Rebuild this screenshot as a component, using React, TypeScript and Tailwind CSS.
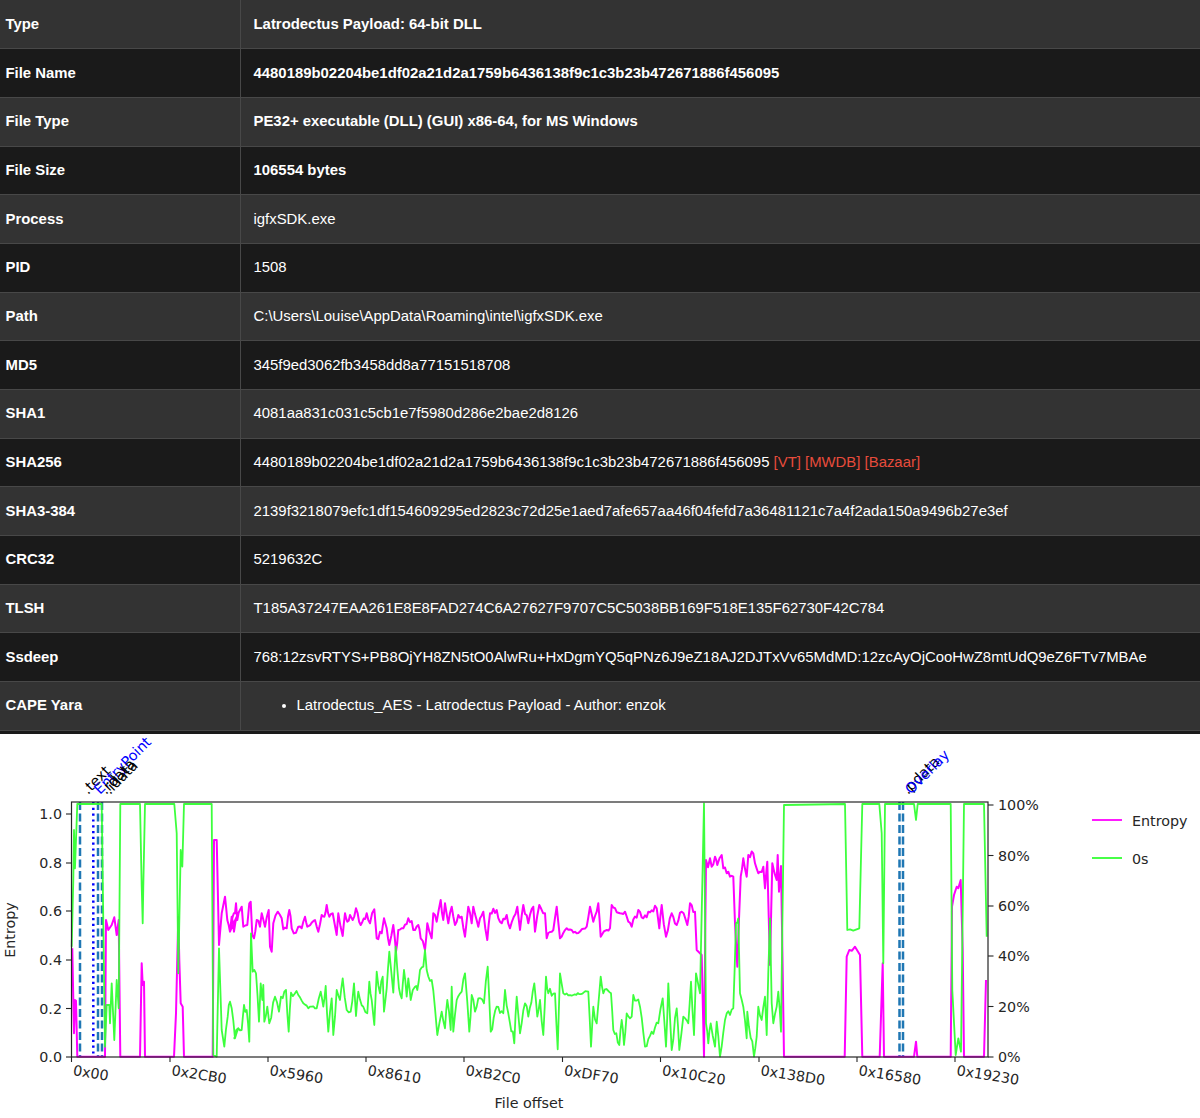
import React from 'react';

type Row = { label: string; value: React.ReactNode; bold?: boolean };

const rows: Row[] = [
    { label: 'Type', value: 'Latrodectus Payload: 64-bit DLL', bold: true },
    { label: 'File Name', value: '4480189b02204be1df02a21d2a1759b6436138f9c1c3b23b472671886f456095', bold: true },
    { label: 'File Type', value: 'PE32+ executable (DLL) (GUI) x86-64, for MS Windows', bold: true },
    { label: 'File Size', value: '106554 bytes', bold: true },
    { label: 'Process', value: 'igfxSDK.exe' },
    { label: 'PID', value: '1508' },
    { label: 'Path', value: 'C:\\Users\\Louise\\AppData\\Roaming\\intel\\igfxSDK.exe' },
    { label: 'MD5', value: '345f9ed3062fb3458dd8a77151518708' },
    { label: 'SHA1', value: '4081aa831c031c5cb1e7f5980d286e2bae2d8126' },
    {
        label: 'SHA256',
        value: (
            <>
                4480189b02204be1df02a21d2a1759b6436138f9c1c3b23b472671886f456095{' '}
                <a className="text-[#e74c3c]">[VT]</a> <a className="text-[#e74c3c]">[MWDB]</a>{' '}
                <a className="text-[#e74c3c]">[Bazaar]</a>
            </>
        ),
    },
    { label: 'SHA3-384', value: '2139f3218079efc1df154609295ed2823c72d25e1aed7afe657aa46f04fefd7a36481121c7a4f2ada150a9496b27e3ef' },
    { label: 'CRC32', value: '5219632C' },
    { label: 'TLSH', value: 'T185A37247EAA261E8E8FAD274C6A27627F9707C5C5038BB169F518E135F62730F42C784' },
    { label: 'Ssdeep', value: '768:12zsvRTYS+PB8OjYH8ZN5tO0AlwRu+HxDgmYQ5qPNz6J9eZ18AJ2DJTxVv65MdMD:12zcAyOjCooHwZ8mtUdQ9eZ6FTv7MBAe' },
    {
        label: 'CAPE Yara',
        value: (
            <ul className="list-disc pl-[43px]">
                <li>Latrodectus_AES - Latrodectus Payload - Author: enzok</li>
            </ul>
        ),
    },
];

// traced from the plot, [x, y] end up as page pixels because the svg viewBox starts at y=734
const z4 = (p: number[][]) => p.map(([x, y]) => [400 + x / 3, 790 + y / 3]);
const z9 = (p: number[][]) => p.map(([x, y]) => [230 + x / 3, 800 + y / 3]);
const z8 = (p: number[][]) => p.map(([x, y]) => [60 + x / 3, 800 + y / 3]);
const z10 = (p: number[][]) => p.map(([x, y]) => [840 + x / 3, 800 + y / 3]);

// the trace is coarser than the real samples, so fill the noisy stretches back in
function roughen(points: number[][], amp: number) {
    const out: number[][] = [];
    points.forEach(([x, y], i) => {
        const next = points[i + 1];
        out.push([x, y]);
        if (!next || x < 222 || x > 782 || (x > 694 && x < 706) || next[0] - x < 2.2) return;
        const calm = (x > 552 && x < 590) || (x > 292 && x < 320);
        const steps = Math.max(2, Math.floor((next[0] - x) / 1.5));
        for (let s = 1; s < steps; s++) {
            const t = s / steps;
            const seed = Math.sin((x + s) * 12.9898 + y * 78.233) * 43758.5453;
            const noise = (seed - Math.floor(seed)) * 2 - 1;
            out.push([x + (next[0] - x) * t, y + (next[1] - y) * t + noise * amp * (calm ? 0.3 : 1)]);
        }
    });
    return out;
}

const entropy = [
    ...z8([[37, 445], [40, 600], [42, 700], [45, 600], [48, 602], [52, 770], [135, 770], [138, 360], [145, 390], [155, 375], [163, 352], [170, 405], [176, 360], [181, 770], [240, 770], [245, 490], [248, 555], [252, 545], [255, 770], [342, 770], [348, 640], [355, 350], [358, 480], [362, 610], [368, 620], [372, 770], [458, 770], [462, 120], [470, 120], [472, 200], [477, 435], [485, 340], [495, 290], [502, 360], [510, 395], [515, 350], [522, 395], [530, 350]]),
    ...z9([[0, 395], [8, 350], [15, 340], [18, 310], [22, 360], [30, 330], [35, 320], [40, 380], [52, 375], [58, 310], [62, 305], [67, 405], [72, 415], [80, 360], [90, 380], [95, 340], [105, 380], [116, 330], [120, 440], [125, 455], [130, 370], [143, 335], [155, 355], [160, 388], [170, 385], [178, 330], [185, 385], [198, 398], [205, 380], [215, 385], [225, 350], [232, 380], [255, 360], [265, 395], [275, 345], [283, 350], [290, 315], [298, 350], [308, 340], [320, 405], [325, 340], [338, 408], [345, 340], [352, 365], [360, 345], [368, 360], [378, 325], [392, 375], [410, 340], [420, 370], [433, 328], [440, 415], [455, 400], [462, 355], [470, 385], [478, 435], [490, 375], [498, 455], [505, 390], [520, 385], [535, 355], [555, 390], [565, 375], [572, 415], [585, 450], [592, 370], [605, 415], [610, 340], [620, 365], [632, 300], [640, 360], [645, 310], [655, 370], [665, 320], [675, 375], [685, 345], [695, 350], [705, 410], [715, 320], [725, 370], [730, 320], [745, 380]]),
    ...z4([[250, 365], [262, 450], [270, 370], [290, 360], [300, 395], [320, 375], [330, 415], [352, 350], [360, 420], [370, 345], [385, 400], [400, 350], [405, 425], [418, 345], [435, 370], [440, 445], [460, 420], [470, 350], [480, 445], [500, 415], [530, 430], [560, 410], [570, 350], [580, 395], [595, 340], [602, 440], [630, 415], [635, 345], [660, 370], [675, 365], [695, 410], [715, 360], [730, 385], [745, 365], [770, 355], [778, 415], [785, 345], [798, 440], [815, 370], [830, 405], [845, 365], [862, 405], [870, 340], [885, 365], [890, 480], [905, 495], [912, 800], [918, 210], [924, 232], [930, 205], [935, 230], [945, 200], [952, 225], [965, 195], [970, 235], [985, 245], [1000, 260], [1005, 400], [1012, 530], [1022, 260], [1030, 205], [1040, 260], [1045, 195], [1060, 190], [1075, 250], [1090, 230], [1095, 295], [1102, 215], [1110, 525], [1117, 220], [1130, 270], [1133, 195], [1137, 305], [1143, 228], [1152, 800]]),
    ...z10([[14, 770], [20, 470], [28, 450], [36, 452], [45, 440], [60, 465], [67, 770], [119, 770], [128, 490], [132, 770], [222, 770], [228, 725], [232, 770], [332, 770], [336, 320], [342, 285], [350, 260], [355, 265], [362, 240], [368, 450], [372, 770], [432, 770], [438, 540]]),
];

const zeros = [
    ...z8([[35, 440], [40, 240], [42, 90], [45, 205], [52, 12], [125, 12], [135, 740], [140, 615], [148, 615], [150, 670], [155, 550], [163, 720], [170, 540], [176, 625], [181, 12], [240, 12], [245, 260], [248, 370], [250, 260], [255, 12], [343, 12], [350, 100], [355, 520], [362, 150], [367, 200], [372, 12], [455, 12], [460, 765], [470, 770], [477, 445], [485, 690], [493, 740], [503, 650], [510, 605], [515, 625], [525, 715], [535, 685]]),
    ...z9([[13, 715], [25, 685], [35, 690], [42, 615], [50, 630], [58, 725], [63, 400], [68, 515], [78, 520], [87, 665], [92, 550], [97, 600], [100, 555], [103, 665], [112, 620], [118, 670], [135, 590], [147, 635], [153, 590], [168, 570], [176, 695], [183, 578], [205, 585], [220, 610], [235, 625], [245, 620], [260, 625], [272, 575], [280, 620], [287, 558], [295, 695], [305, 595], [310, 705], [320, 570], [330, 600], [338, 535], [350, 630], [362, 635], [372, 550], [378, 648], [385, 575], [400, 620], [412, 640], [418, 545], [425, 600], [433, 675], [440, 515], [450, 580], [458, 530], [462, 635], [470, 565], [478, 455], [490, 578], [497, 440], [507, 565], [515, 595], [522, 510], [530, 590], [535, 535], [542, 600], [555, 560], [562, 570], [570, 510], [580, 500], [585, 450], [590, 510], [605, 540], [615, 625], [622, 705], [635, 635], [645, 685], [652, 600], [662, 690], [665, 560], [670, 695], [680, 600], [695, 575], [705, 520], [718, 695], [725, 585], [735, 635], [745, 595]]),
    ...z4([[252, 640], [263, 530], [272, 725], [290, 650], [310, 670], [315, 600], [325, 670], [343, 760], [350, 620], [360, 730], [375, 640], [385, 680], [403, 580], [412, 680], [420, 630], [430, 735], [438, 560], [445, 610], [465, 610], [473, 778], [480, 550], [490, 610], [520, 615], [565, 605], [573, 770], [580, 650], [590, 700], [602, 560], [610, 610], [633, 610], [640, 720], [658, 765], [665, 690], [672, 765], [680, 670], [695, 680], [700, 615], [720, 650], [735, 770], [775, 700], [788, 625], [798, 770], [805, 580], [815, 780], [830, 655], [838, 780], [850, 680], [865, 700], [873, 575], [882, 735], [888, 550], [900, 610], [912, 40], [918, 700], [925, 760], [932, 700], [945, 770], [950, 695], [960, 800], [975, 690], [1000, 655], [1008, 400], [1015, 385], [1020, 610], [1030, 650], [1040, 745], [1042, 665], [1062, 800], [1070, 740], [1075, 650], [1085, 690], [1095, 620], [1100, 735], [1110, 385], [1115, 640], [1120, 700], [1135, 605], [1143, 725], [1152, 45]]),
    ...z10([[15, 12], [22, 390], [30, 388], [40, 392], [58, 385], [67, 12], [118, 12], [125, 100], [130, 490], [135, 12], [222, 12], [228, 60], [233, 12], [332, 12], [337, 570], [347, 765], [355, 715], [363, 755], [372, 12], [432, 12], [440, 410]]),
];

const toPoints = (p: number[][]) => p.map(([x, y]) => x.toFixed(1) + ',' + y.toFixed(1)).join(' ');

const xTicks = [
    [71.5, '0x00'], [170, '0x2CB0'], [268, '0x5960'], [366, '0x8610'], [464, '0xB2C0'],
    [562.5, '0xDF70'], [660.5, '0x10C20'], [759, '0x138D0'], [857, '0x16580'], [955, '0x19230'],
] as [number, string][];
const leftTicks = [[814, '1.0'], [863, '0.8'], [911, '0.6'], [960, '0.4'], [1008.5, '0.2'], [1057, '0.0']] as [number, string][];
const rightTicks = [[805, '100%'], [855.5, '80%'], [906, '60%'], [956, '40%'], [1006.5, '20%'], [1057, '0%']] as [number, string][];

const sections = [
    [80, 'dash'], [93.3, 'dot'], [98, 'dash'], [102, 'dash'], [899.5, 'dash'], [903, 'dash'],
] as [number, string][];
const sectionLabels = [
    [88, '.text', 'black'], [100, 'EntryPoint', 'blue'], [106, '.rdata', 'black'], [110, '.idata', 'black'],
    [908, '.pdata', 'black'], [911, 'Overlay', 'blue'],
] as [number, string, string][];

function EntropyChart() {
    return (
        <svg viewBox="0 734 1200 384" className="block w-[1200px] h-[384px] bg-white font-['DejaVu_Sans',sans-serif] text-[14.3px]">
            {sections.map(([x, kind]) => (
                <line
                    key={x}
                    x1={x}
                    x2={x}
                    y1={802}
                    y2={1057}
                    stroke={kind === 'dot' ? '#0000ff' : '#1f77b4'}
                    strokeWidth={2.5}
                    strokeDasharray={kind === 'dot' ? '2.2 3.6' : '8 3.5'}
                />
            ))}
            <polyline points={toPoints(roughen(entropy, 3.5))} fill="none" stroke="#ff00ff" strokeWidth={2} strokeLinejoin="round" />
            <polyline points={toPoints(roughen(zeros, 4.5))} fill="none" stroke="#33ff33" strokeWidth={1.8} strokeLinejoin="round" opacity={0.95} />
            <rect x={71.5} y={802} width={916.5} height={255} fill="none" stroke="#262626" strokeWidth={1.2} />

            {xTicks.map(([x, t]) => (
                <g key={t}>
                    <line x1={x} x2={x} y1={1057} y2={1062} stroke="#262626" strokeWidth={1.1} />
                    <text x={x + 1} y={1075} transform={`rotate(9 ${x + 1} 1075)`} fill="#262626">{t}</text>
                </g>
            ))}
            {leftTicks.map(([y, t]) => (
                <g key={t}>
                    <line x1={66} x2={71.5} y1={y} y2={y} stroke="#262626" strokeWidth={1.1} />
                    <text x={62} y={y + 5} textAnchor="end" fill="#262626">{t}</text>
                </g>
            ))}
            {rightTicks.map(([y, t]) => (
                <g key={t}>
                    <line x1={988} x2={993.5} y1={y} y2={y} stroke="#262626" strokeWidth={1.1} />
                    <text x={998} y={y + 5} fill="#262626">{t}</text>
                </g>
            ))}

            {sectionLabels.map(([x, t, color]) => (
                <text key={t} x={x} y={795} transform={`rotate(-45 ${x} 795)`} fill={color}>{t}</text>
            ))}

            <text x={529} y={1108} textAnchor="middle" fill="#262626">File offset</text>
            <text x={15} y={930} textAnchor="middle" transform="rotate(-90 15 930)" fill="#262626">Entropy</text>

            <line x1={1092} x2={1122} y1={820} y2={820} stroke="#ff00ff" strokeWidth={1.8} />
            <text x={1132} y={826} fill="#262626">Entropy</text>
            <line x1={1092} x2={1122} y1={858} y2={858} stroke="#33ff33" strokeWidth={1.8} />
            <text x={1132} y={864} fill="#262626">0s</text>
        </svg>
    );
}

export default function App() {
    return (
        <main className="w-[1200px] min-h-[1118px] bg-white font-['Liberation_Sans',Arial,sans-serif] text-[14.9px] text-white">
            <div className="h-[734px] bg-[#1a1a1a]">
                <table className="w-full table-fixed border-collapse">
                    <tbody>
                        {rows.map((row, i) => (
                            <tr key={row.label} className={`h-[48.7px] border-b border-[#484848] ${i % 2 === 0 ? 'bg-[#333333]' : 'bg-[#1a1a1a]'}`}>
                                <th className="w-[240px] pl-[5.5px] pb-[0.6px] text-left font-bold align-middle border-r border-[#484848]">{row.label}</th>
                                <td className={`pl-[13px] pb-[0.6px] align-middle ${row.bold ? 'font-bold' : 'font-normal'}`}>{row.value}</td>
                            </tr>
                        ))}
                    </tbody>
                </table>
            </div>
            <EntropyChart />
        </main>
    );
}
